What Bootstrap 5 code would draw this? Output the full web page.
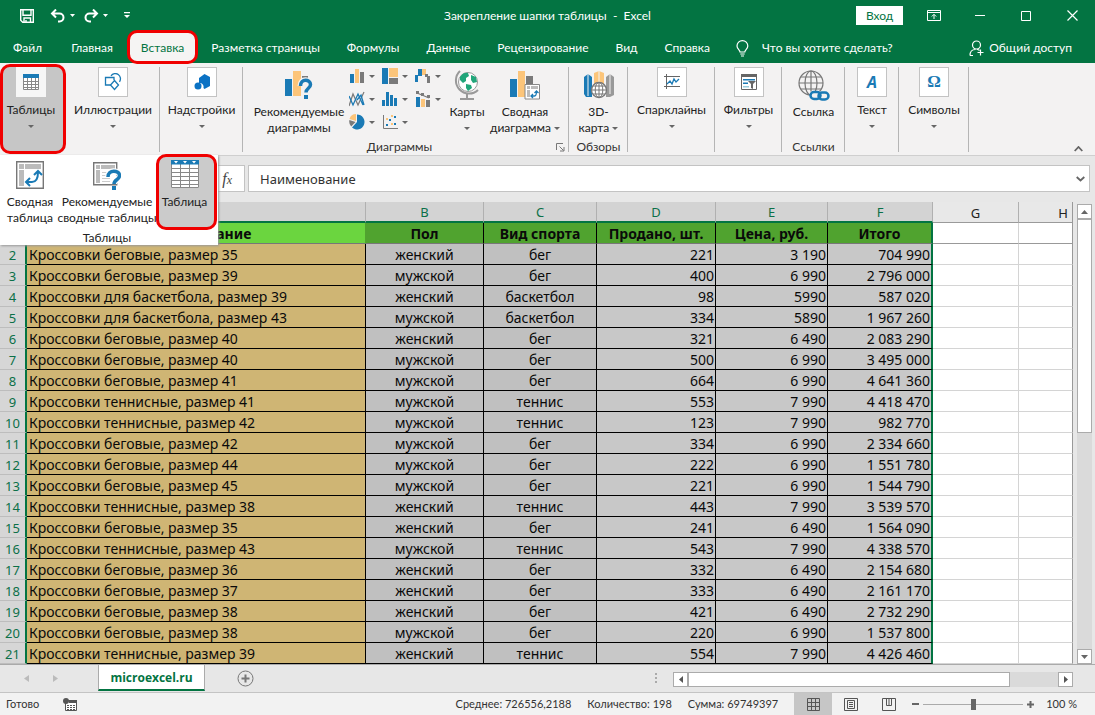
<!DOCTYPE html>
<html lang="ru">
<head>
<meta charset="utf-8">
<meta name="viewport" content="width=device-width, initial-scale=1">
<title>Закрепление шапки таблицы - Excel</title>
<link href="https://cdn.jsdelivr.net/npm/bootstrap@5.3.0/dist/css/bootstrap.min.css" rel="stylesheet">
<style>
:root{--xl:#037442;--blue:#1a7ab5;--org:#fcc57a;--gr:#7a7a7a;--ln:#ababab}
body{font-family:Lato,"Open Sans",sans-serif;font-size:12px;line-height:16px;color:#222;background:#e7e7e7}
button{font:inherit;color:inherit;background:none;border:0;padding:0}
svg{display:block;flex:none}
.red-ring{border:3px solid #f00000;border-radius:10px}
/* title and tabs */
.titlebar{height:31px;background:var(--xl);color:#fff}
.titlebar .win{width:46px;height:28px}
.signin{background:#fff;color:var(--xl);width:47px;height:19px;line-height:19px}
.side{flex:1 1 0}
.save{margin-left:20px}
.tabs{height:32px;background:var(--xl);color:#fff;padding-right:23px}
.tabs button{height:32px;padding:2px 14px 0 13px;white-space:nowrap}
.tabs .file{padding-right:16px}
.tabs .current{background:#f5f4f3;color:var(--xl);padding:2px 11px 0;height:34px;position:relative;z-index:3}
.tabs .tell{gap:13px}
/* ribbon */
.ribbon{height:93px;background:#f3f2f2;border-bottom:1px solid #cfcfcf;padding-bottom:3px}
.grp{padding-top:4px;position:relative}
.grp::after{content:"";position:absolute;right:0;top:4px;bottom:0;width:1px;background:#b5b5b5}
.grp.first::after{display:none}
.grp-label{height:10px;line-height:10px;color:#333}
.big{display:flex;flex-direction:column;align-items:center;text-align:center;white-space:nowrap}
.big .pic{height:37px;padding-top:2px}
.fold .icobox{width:30px;height:30px;border:1px solid #c3c3c3;background:#fff;display:flex;align-items:center;justify-content:center;margin-bottom:5px}
.caret{width:0;height:0;border:3px solid transparent;border-top-color:#666;border-bottom:0;display:inline-block}
.fold .caret,.big .below{margin-top:7px}
.g-tab{width:66px;padding:0}
.g-tab .fold{width:66px;height:90px;background:#c6c6c6;margin-top:1px;padding-right:4px}
.g-tab .icobox{border-color:#f6f6f6;background:#f6f6f6}
.chart-grid{display:grid;grid-template-columns:repeat(3,33px);grid-auto-rows:23px;align-content:start}
.chart-grid button{display:flex;align-items:center;gap:4px;height:18px}
.w-ill{width:94px}.w-add{width:83px}.w-chart{width:326px}.w-map{width:59px}.w-spark{width:87px}.w-filt{width:67px}.w-link{width:63px}.w-text{width:54px}.w-sym{width:70px}
.rec{width:100px;margin-left:6px}.maps{width:38px}.pivotc{width:78px}
/* gallery that drops from the first button */
.drop{position:absolute;left:0;top:92px;width:218px;height:90px;background:#fff;box-shadow:1px 1px 2px #999;z-index:5}
.drop .big .pic{height:39px;padding-top:6px}
.d1{width:60px}.d2{width:94px}.d3{width:61px;height:76px;margin-top:-1px;margin-left:2px;background:#cbcbcb;padding-right:4px}
.drop .d3 .pic{height:37px;padding-top:3px}
/* formula bar */
.fbar{height:46px;padding:9px 5px 0 0}
.fbar>*{height:27px}
.fx{width:245px;background:#fff;border:1px solid #c3c3c3;padding-right:12px;font:italic 16px "Liberation Serif",serif;color:#444}
.fx small{font-size:12px}
.fbox{background:#fff;border:1px solid #c3c3c3;margin-left:3px}
.fbox input{border:0;outline:0;padding:0 0 0 11px;font:13px "Noto Sans",sans-serif;color:#333;background:none;min-width:0}
/* sheet */
.gridwrap{min-height:0;overflow:hidden;border-bottom:1px solid #aaa}
.sheet{table-layout:fixed;width:100%;border-collapse:separate;border-spacing:0;font:14px/18px "Noto Sans",sans-serif;color:#0a0a0a}
.sheet th,.sheet td{height:21px;padding:2px 1px 0;white-space:nowrap;overflow:hidden;border:0 solid #000;border-width:0 1px 1px 0}
.sheet thead th{font-weight:400;font-size:13px;text-align:center;line-height:17px;background:#d3d3d3;color:#0b7048;border-right-color:#b0b0b0;border-bottom:2px solid var(--xl)}
.sheet thead th.off{background:#e8e8e8;color:#222;border-bottom:1px solid #9a9a9a}
.sheet tbody th{font-weight:400;font-size:13px;text-align:center;background:#d6d6d6;color:#0b7048;border-color:#bdbdbd;border-right:2px solid var(--xl);padding:2px 0 0}
.sheet td.c-a{background:#cfb574;padding-left:2px}
.sheet td.c-m{background:#c0c0c0;text-align:center}
.sheet td.c-n{background:#c8c8c8;text-align:right}
.sheet td.c-f{border-right:2px solid var(--xl)}
.sheet td.off{background:#fff;border-color:#d4d4d4}
.sheet tr.hd td{font-weight:700;text-align:center;background:#50a32f;border-bottom-color:#777}
.sheet tr.hd td.c-a{background:#6bd53f;border-right-color:#50a32f}
.sheet tr.hd td.off{background:#fff;border-bottom-color:#999}
.sheet .last{border-right-color:#999!important}
.vscroll{width:22px;padding:2px 3px 0 4px}
.sbtn{width:15px;height:15px;background:#fff;border:1px solid #ababab;display:flex;align-items:center;justify-content:center;flex:none}
.vthumb{height:214px;background:#fff;border:1px solid #ababab}
.track{background:#dadada}
/* sheet tabs */
.sheets{height:28px;border-bottom:1px solid #c4c4c4;padding-right:22px}
.sheet-tab{width:107px;height:26px;background:#fff;border:1px solid #ababab;border-top:0;border-bottom:2px solid var(--xl);color:var(--xl);font:700 12px "Open Sans",sans-serif}
.hbar{width:400px;height:15px;margin-top:7px}
.hthumb{width:322px;background:#fff;border:1px solid #ababab}
/* status */
.status{height:22px;background:#f2f2f2;font-size:11px;color:#333;padding:0 18px 0 6px;white-space:nowrap}
.vw{width:38px;height:22px;display:flex;align-items:center;justify-content:center}
.vw.on{background:#c6c6c6}
.zoom{appearance:none;width:100px;height:12px;background:linear-gradient(#aaa,#aaa) center/100% 1px no-repeat;margin:0 4px}
.zoom::-webkit-slider-thumb{appearance:none;width:5px;height:11px;background:#666;border:0;border-radius:0}
</style>
</head>
<body class="vh-100 d-flex flex-column overflow-hidden">

<header>
  <div class="titlebar d-flex">
    <div class="side d-flex align-items-center">
      <button class="save" aria-label="Сохранить"><svg width="14" height="14" viewBox="0 0 14 14" fill="none" stroke="#fff" stroke-width="1.4"><path d="M.7.7h12.6v12.6H2.7l-2-2zM3 .7v5.6h8V.7M4 13V9h6.500v4M6 11v2"/></svg></button>
      <button class="d-flex align-items-center ms-3" aria-label="Отменить"><svg width="16" height="14" viewBox="0 0 16 14" fill="none" stroke="#fff" stroke-width="2"><path d="M2 4.500h7.500a4 4 0 0 1 0 8H8M6 .5l-4 4 4 4"/></svg><svg class="ms-1" width="5" height="3"><path d="M0 0h5L2.500 3z" fill="#fff"/></svg></button>
      <button class="d-flex align-items-center ms-2" aria-label="Вернуть"><svg width="16" height="14" viewBox="0 0 16 14" fill="none" stroke="#fff" stroke-width="2"><path d="M14 4.500H6.500a4 4 0 0 0 0 8H8M10 .5l4 4-4 4"/></svg><svg class="ms-1" width="5" height="3"><path d="M0 0h5L2.500 3z" fill="#fff"/></svg></button>
      <button class="ms-3" aria-label="Настройка панели"><svg width="6" height="7"><path d="M0 0h6v1.200H0zM0 3h6L3 6z" fill="#fff"/></svg></button>
    </div>
    <div class="align-self-center" style="white-space:pre">Закрепление шапки таблицы  -  Excel</div>
    <div class="side d-flex justify-content-end align-items-center">
      <button class="signin me-1">Вход</button>
      <button class="win ms-1 d-flex align-items-center justify-content-center" aria-label="Параметры ленты"><svg width="14" height="11" viewBox="0 0 14 11" fill="none" stroke="#fff"><path d="M.5.5h13v10H.5zM.5 2.500h13M7 9V4.500M4.800 6.500L7 4.300l2.200 2.200"/></svg></button>
      <button class="win d-flex align-items-center justify-content-center" aria-label="Свернуть"><svg width="10" height="1"><path d="M0 0h10v1H0z" fill="#fff"/></svg></button>
      <button class="win d-flex align-items-center justify-content-center" aria-label="Развернуть"><svg width="10" height="10" fill="none" stroke="#fff"><path d="M.5.5h9v9h-9z"/></svg></button>
      <button class="win d-flex align-items-center justify-content-center" aria-label="Закрыть"><svg width="11" height="11" fill="none" stroke="#fff" stroke-width="1.200"><path d="M.5.5l10 10M10.500.5l-10 10"/></svg></button>
    </div>
  </div>
  <nav class="tabs d-flex align-items-center">
    <button class="file">Файл</button><button>Главная</button><button class="current red-ring">Вставка</button><button>Разметка страницы</button><button>Формулы</button><button>Данные</button><button>Рецензирование</button><button>Вид</button><button>Справка</button>
    <button class="tell d-flex align-items-center px-2 ms-1"><svg width="13" height="17" viewBox="0 0 13 17" fill="none" stroke="#fff" stroke-width="1.200"><path d="M4 12c0-2-3-3-3-6a5.300 5.300 0 0 1 10.800 0c0 3-3 4-3 6zM4.300 14h4.400M5 16h3"/></svg><span>Что вы хотите сделать?</span></button>
    <button class="ms-auto d-flex align-items-center gap-1 px-0"><svg width="16" height="17" viewBox="0 0 16 17" fill="none" stroke="#fff" stroke-width="1.200"><circle cx="7.500" cy="5" r="4"/><path d="M1 15.500c0-4 2.500-6 5.500-6M8 9.500c1.500 0 2 .5 2.500 1M1 15.500h3M11.500 9.500v6M8.500 12.500h6"/></svg><span>Общий доступ</span></button>
  </nav>
</header>

<section class="ribbon d-flex position-relative" aria-label="Лента">
  <div class="grp first g-tab"><button class="big fold red-ring"><span class="icobox"><svg width="16" height="16" viewBox="0 0 16 16"><path fill="#fff" d="M0 0h16v16H0z"/><path fill="none" stroke="#888" d="M.5 4v11.500h15V4M0 7.500h16M0 10.500h16M0 13.500h16M4.500 4v11M8.500 4v11M12.500 4v11"/><path fill="#1a7ab5" d="M0 0h16v4H0z"/></svg></span>Таблицы<span class="caret"></span></button></div>
  <div class="grp w-ill"><button class="big fold w-100"><span class="icobox"><svg width="18" height="18" viewBox="0 0 18 18" fill="none" stroke="#1a7ab5" stroke-width="1.300"><path d="M8 12H1.500V4.500H10V7M7 2.800a5 5 0 1 1 8.500 6"/><path d="M10.500 7.500L14.500 12l-4 4.500-4-4.500z" fill="#fff"/></svg></span>Иллюстрации<span class="caret"></span></button></div>
  <div class="grp w-add"><button class="big fold w-100"><span class="icobox"><svg width="16" height="16" viewBox="0 0 16 16" fill="#0b72c4"><path d="M5 4l5.500-4L16 3v9l-5.500 3-1-1a4 4 0 0 0-4.500-5z"/><circle cx="4" cy="12" r="3.500"/></svg></span>Надстройки<span class="caret"></span></button></div>

  <div class="grp w-chart d-flex flex-column">
    <div class="d-flex flex-fill">
      <button class="big rec"><span class="pic"><svg width="30" height="32" viewBox="0 0 30 32"><path fill="#1a7ab5" d="M1 10h7v17H1z"/><path fill="#fcc57a" d="M9 2h8v25H9z"/><path fill="#7a7a7a" d="M18 7h6v3h-6z"/><path d="M16.500 17c0-8 10-7 10-1.500 0 4-4.500 3.500-4.500 8" fill="none" stroke="#f3f2f2" stroke-width="6"/><path d="M16.500 17c0-8 10-7 10-1.500 0 4-4.500 3.500-4.500 8" fill="none" stroke="#1a7ab5" stroke-width="3.500"/><path fill="#1a7ab5" d="M20 26h4v4h-4z"/></svg></span>Рекомендуемые<br>диаграммы</button>
      <div class="chart-grid">
        <button aria-label="Гистограмма"><svg width="16" height="16"><path fill="#1a7ab5" d="M1 6h4v9H1z"/><path fill="#fcc57a" d="M6 1h4v14H6z"/><path fill="#7a7a7a" d="M11 4h4v11h-4z"/></svg><i class="caret"></i></button>
        <button aria-label="Иерархическая"><svg width="16" height="16"><path fill="#1a7ab5" d="M0 0h6v16H0z"/><path fill="#fcc57a" d="M7 0h9v9H7z"/><path fill="#7a7a7a" d="M7 10h9v6H7z"/></svg><i class="caret"></i></button>
        <button aria-label="Каскадная"><svg width="16" height="16"><path fill="#1a7ab5" d="M0 7h3v7H0zM3 1h4v7H3z"/><path fill="#fcc57a" d="M7 1h4v6H7z"/><path fill="#7a7a7a" d="M10 6h3v3h-3zM12 8h3v7h-3z"/></svg><i class="caret"></i></button>
        <button aria-label="График"><svg width="16" height="16" fill="none"><path stroke="#7a7a7a" stroke-width="1.200" d="M0 15L4 3l5 11 6-13"/><path stroke="#1a7ab5" stroke-width="1.300" d="M0 5l4 9 5-11 5 11M8 9l4-5 3 10"/></svg><i class="caret"></i></button>
        <button aria-label="Статистическая"><svg width="16" height="16" fill="#1a7ab5"><path d="M0 9h3v6H0zM4 1h3v14H4zM8 4h3v11H8zM12 7h3v8h-3z"/></svg><i class="caret"></i></button>
        <button aria-label="Комбинированная"><svg width="16" height="16"><path fill="#1a7ab5" d="M1 6h4v10H1z"/><path fill="#fcc57a" d="M6 8h4v8H6z"/><path fill="#7a7a7a" d="M11 9h4v7h-4z"/><path d="M2 2l5 2 7 3" stroke="#7a7a7a" stroke-width="1.300" fill="none"/><path fill="#7a7a7a" d="M1 0h3v3H1zM6 2h3v3H6zM12 4h3v3h-3z"/></svg><i class="caret"></i></button>
        <button aria-label="Круговая"><svg width="16" height="16"><path fill="#1a7ab5" d="M8 8V.5A7.500 7.500 0 1 1 3 13.600z"/><path fill="#fcc57a" d="M7 7V0a7 7 0 0 0-6.500 5z"/><path fill="#7a7a7a" d="M6.500 8L.4 6a7 7 0 0 0 1.800 6.500z"/></svg><i class="caret"></i></button>
        <button aria-label="Точечная"><svg width="16" height="16"><path d="M1.500 1v13.500H16" stroke="#7a7a7a" fill="none"/><path fill="#1a7ab5" d="M4 10h2v2H4zM7 5h2v2H7zM12 9h2v2h-2zM12 2h2v2h-2z"/><path fill="#fcc57a" d="M4 4h2v2H4zM9 9h2v2H9zM9 1h2v2H9z"/></svg><i class="caret"></i></button>
      </div>
      <button class="big maps"><span class="pic"><svg width="28" height="32" viewBox="0 0 28 32" fill="none"><circle cx="15" cy="13" r="9.500" fill="#fff" stroke="#999"/><path fill="#21a67a" d="M7 8c2-4 6-5 8-4l1 3-3 2v3l-3 2-3-3zM18 6l5 2 1 5-4 1-2-3zM13 15l5 1 1 3-4 3-2-3z"/><path d="M7 2A13 13 0 1 0 25 21" stroke="#999" stroke-width="2"/><path d="M14 25v4M7 30h14" stroke="#999" stroke-width="2"/></svg></span>Карты<span class="caret below"></span></button>
      <button class="big pivotc"><span class="pic"><svg width="30" height="32" viewBox="0 0 30 32"><path fill="#1a7ab5" d="M0 10h7v18H0z"/><path fill="#fcc57a" d="M8 2h7v26H8z"/><path fill="#7a7a7a" d="M16 7h7v9h-7z"/><path d="M15 15.500h14.500V30H15z" fill="#fff" stroke="#888"/><path fill="#bbb" d="M17 17h3v3h-3zM21 17h7v3h-7zM17 21h3v7h-3z"/><path d="M21 27h3.500q2 0 2-5M23 25l-2 2 2 2M24.500 24l2-2 2 2" fill="none" stroke="#1a7ab5" stroke-width="1.300"/></svg></span>Сводная<span class="text-nowrap">диаграмма <i class="caret align-middle"></i></span></button>
    </div>
    <div class="grp-label d-flex align-items-center"><span class="flex-fill text-center">Диаграммы</span><button class="me-1" aria-label="Параметры диаграмм"><svg width="9" height="9" fill="none" stroke="#777"><path d="M.5 7V.5H7M3.500 3.500l4 4M8 4v4H4"/></svg></button></div>
  </div>

  <div class="grp w-map d-flex flex-column">
    <button class="big flex-fill"><span class="pic"><svg width="30" height="32" viewBox="0 0 30 32"><path fill="#1a7ab5" d="M0 8l4-3 4 3v20H2l-2-3z"/><path fill="#fcc57a" d="M10 4l5-2 5 2v14H10z"/><path fill="#999" d="M22 8l4-3 4 3v18l-4 2h-4z"/><path d="M4 5v22M15 2v12M26 5v20" stroke="#f3f2f2"/><circle cx="15" cy="21" r="7.500" fill="#fff" stroke="#777" stroke-width="1.300"/><path d="M7.500 21h15M15 13.500v15M9 17h12M9 25h12" stroke="#777"/><ellipse cx="15" cy="21" rx="3.800" ry="7.500" fill="none" stroke="#777"/></svg></span>3D-<span>карта <i class="caret align-middle"></i></span></button>
    <div class="grp-label text-center">Обзоры</div>
  </div>
  <div class="grp w-spark"><button class="big fold w-100"><span class="icobox"><svg width="16" height="16" viewBox="0 0 16 16" fill="none"><path stroke="#666" d="M2.500 0v15M0 2.500h16M0 12.500h16"/><path stroke="#1a7ab5" stroke-width="1.300" d="M3 10l3-3 2 3 2-5 2 3 3-3"/></svg></span>Спарклайны<span class="caret"></span></button></div>
  <div class="grp w-filt"><button class="big fold w-100"><span class="icobox"><svg width="16" height="16" viewBox="0 0 16 16"><path d="M.5.5h15v15H.5z" fill="#fff" stroke="#666"/><path fill="#666" d="M0 0h16v3H0zM7 7h8l-3 3v5l-2-1v-4z"/><path fill="#1a7ab5" d="M2 5h12v1.500H2zM2 8.500h5V10H2z"/><path fill="#9cd" d="M2 12h6v1.500H2z"/></svg></span>Фильтры<span class="caret"></span></button></div>
  <div class="grp w-link d-flex flex-column">
    <button class="big flex-fill"><span class="pic"><svg width="32" height="34" viewBox="0 0 32 34" fill="none" stroke="#777" stroke-width="1.200"><circle cx="13" cy="14" r="12"/><ellipse cx="13" cy="14" rx="6" ry="12"/><path d="M13 2v24M1 14h24M3 8h20M3 20h20"/><path stroke="#f3f2f2" stroke-width="9" d="M12 27h19"/><rect x="12.500" y="23" width="10" height="7" rx="3.500" stroke="#1a7ab5" stroke-width="2.500"/><rect x="20.500" y="23.500" width="10" height="7" rx="3.500" stroke="#1a7ab5" stroke-width="2.500"/></svg></span>Ссылка</button>
    <div class="grp-label text-center">Ссылки</div>
  </div>
  <div class="grp w-text"><button class="big fold w-100"><span class="icobox" style="color:#1a7ab5;font:italic 700 16px 'Open Sans',sans-serif">A</span>Текст<span class="caret"></span></button></div>
  <div class="grp w-sym"><button class="big fold w-100"><span class="icobox" style="color:#1a7ab5;font:700 17px 'Liberation Serif',serif">Ω</span>Символы<span class="caret"></span></button></div>
  <button class="ms-auto align-self-end me-2 pe-1" aria-label="Свернуть ленту"><svg width="9" height="6" fill="none" stroke="#666" stroke-width="1.800"><path d="M.7 5l3.800-4 3.800 4"/></svg></button>

  <div class="drop">
    <div class="d-flex">
      <button class="big d1"><span class="pic"><svg width="28" height="28" viewBox="0 0 28 28"><path d="M.7.700h26.600v26.600H.7z" fill="#fff" stroke="#777" stroke-width="1.400"/><path fill="#bbb" d="M3 3h5v5H3zM9 3h16v5H9zM3 9h5v16H3z"/><path d="M11 21h5q6 0 6-10M14 17l-4 4 4 4M18 14l4-4 4 4" fill="none" stroke="#1a7ab5" stroke-width="2"/></svg></span>Сводная<br>таблица</button>
      <button class="big d2"><span class="pic"><svg width="28" height="30" viewBox="0 0 28 30"><path d="M.7 1.700h23v22H.7z" fill="#fff" stroke="#777" stroke-width="1.400"/><path fill="#bbb" d="M3 4h4v4H3zM8 4h14v4H8zM3 9h4v13H3z"/><path stroke="#ccc" d="M9 11.500h12M9 14.500h8M9 17.500h8M9 20.500h8"/><path d="M15 16c0-8 11.500-7 11.500-1.500 0 4.500-5.500 4-5.500 8.500" fill="none" stroke="#fff" stroke-width="6"/><path d="M15 16c0-8 11.500-7 11.500-1.500 0 4.500-5.500 4-5.500 8.500" fill="none" stroke="#1a7ab5" stroke-width="3.500"/><path fill="#1a7ab5" d="M19 25h4v4h-4z"/></svg></span>Рекомендуемые<br>сводные таблицы</button>
      <button class="big d3 red-ring"><span class="pic"><svg width="28" height="28" viewBox="0 0 28 28"><path fill="#fff" d="M0 0h28v28H0z"/><path fill="none" stroke="#888" d="M.5 4v23.500h27V4M0 8.500h28M0 12.500h28M0 16.500h28M0 20.500h28M0 24.500h28M9.500 4v23M18.500 4v23"/><path fill="#1a7ab5" d="M0 0h28v4.500H0z"/><path fill="#fff" d="M3 1h4L5 3.500zM12 1h4l-2 2.500zM21 1h4l-2 2.500z"/></svg></span>Таблица</button>
    </div>
    <div class="text-center pe-1">Таблицы</div>
  </div>
</section>

<div class="fbar d-flex">
  <button class="fx text-end" aria-label="Вставить функцию">f<small>x</small></button>
  <div class="fbox flex-fill d-flex align-items-center"><input class="flex-fill h-100" aria-label="Строка формул" value="Наименование"><svg class="me-1" width="9" height="6" fill="none" stroke="#666" stroke-width="1.800"><path d="M.7 1l3.800 3.500L8.300 1"/></svg></div>
</div>

<main class="gridwrap d-flex flex-fill">
  <div class="flex-fill overflow-hidden">
    <table class="sheet">
      <colgroup><col style="width:27px"><col style="width:339px"><col style="width:118px"><col style="width:113px"><col style="width:119px"><col style="width:112px"><col style="width:105px"><col style="width:86px"><col></colgroup>
      <thead><tr><th></th><th></th><th>B</th><th>C</th><th>D</th><th>E</th><th>F</th><th class="off">G</th><th class="off last text-end pe-1">H</th></tr></thead>
      <tbody id="rows">
        <tr class="hd"><th></th><td class="c-a">Наименование</td><td>Пол</td><td>Вид спорта</td><td>Продано, шт.</td><td>Цена, руб.</td><td class="c-f">Итого</td><td class="off"></td><td class="off last"></td></tr>
      </tbody>
    </table>
  </div>
  <div class="vscroll d-flex flex-column">
    <button class="sbtn" aria-label="Вверх"><svg width="7" height="4"><path d="M0 4h7L3.500 0z" fill="#666"/></svg></button>
    <div class="track flex-fill"><div class="vthumb"></div></div>
    <button class="sbtn" aria-label="Вниз"><svg width="7" height="4"><path d="M0 0h7L3.500 4z" fill="#666"/></svg></button>
  </div>
</main>

<div class="sheets d-flex">
  <div class="d-flex align-items-center ps-4" style="width:98px">
    <button aria-label="Предыдущий лист"><svg width="5" height="7"><path d="M5 0v7L0 3.500z" fill="#bbb"/></svg></button>
    <button class="ms-4" aria-label="Следующий лист"><svg width="5" height="7"><path d="M0 0v7l5-3.500z" fill="#bbb"/></svg></button>
  </div>
  <button class="sheet-tab">microexcel.ru</button>
  <button class="ms-4 ps-2" aria-label="Новый лист"><svg width="17" height="17" fill="none" stroke="#777"><circle cx="8.500" cy="8.500" r="7.500"/><path stroke-width="2" d="M8.500 4.500v8M4.500 8.500h8"/></svg></button>
  <svg class="ms-auto me-3 align-self-center" width="2" height="12"><path fill="#aaa" d="M0 0h2v2H0zM0 4h2v2H0zM0 8h2v2H0z"/></svg>
  <div class="hbar d-flex">
    <button class="sbtn" aria-label="Влево"><svg width="4" height="7"><path d="M4 0v7L0 3.500z" fill="#555"/></svg></button>
    <div class="track flex-fill d-flex"><div class="hthumb"></div></div>
    <button class="sbtn" aria-label="Вправо"><svg width="4" height="7"><path d="M0 0v7l4-3.500z" fill="#555"/></svg></button>
  </div>
</div>

<footer class="status d-flex align-items-center">
  <span>Готово</span>
  <svg class="ms-4" width="14" height="13" viewBox="0 0 14 13"><path d="M2.500 2.500h11v10h-11z" fill="#fff" stroke="#555"/><path fill="#555" d="M6 2h8v3H6z"/><path stroke="#555" stroke-dasharray="2 1" d="M4 7.500h9M4 9.500h9M4 11.500h9"/><circle cx="3" cy="3" r="3" fill="#555"/></svg>
  <div class="ms-auto d-flex gap-3 me-3"><span>Среднее: 726556,2188</span><span>Количество: 198</span><span>Сумма: 69749397</span></div>
  <button class="vw on" aria-label="Обычный"><svg width="13" height="13" fill="none" stroke="#555"><path d="M.5.500h12v12H.5zM4.500 0v13M8.500 0v13M0 4.500h13M0 8.500h13"/></svg></button>
  <button class="vw" aria-label="Разметка страницы"><svg width="14" height="13" fill="none" stroke="#555"><path d="M.5.500h13v12H.5zM3.500 2.500h7v8h-7zM5 4.500h4M5 6.500h4M5 8.500h4"/></svg></button>
  <button class="vw" aria-label="Страничный"><svg width="14" height="13" fill="none" stroke="#555"><path d="M.5.500h13v12H.5zM4.500 0v7.500h5V0M7 0v7"/></svg></button>
  <button class="ms-1" aria-label="Уменьшить"><svg width="7" height="2"><path fill="#666" d="M0 0h7v2H0z"/></svg></button>
  <input class="zoom" type="range" min="0" max="100" value="50" aria-label="Масштаб">
  <button aria-label="Увеличить"><svg width="7" height="7"><path fill="#666" d="M0 2.500h7v2H0zM2.500 0h2v7h-2z"/></svg></button>
  <span class="ms-2 ps-1">100 %</span>
</footer>

<script>
const data = `Кроссовки беговые, размер 35|женский|бег|221|3 190|704 990
Кроссовки беговые, размер 39|мужской|бег|400|6 990|2 796 000
Кроссовки для баскетбола, размер 39|женский|баскетбол|98|5990|587 020
Кроссовки для баскетбола, размер 43|мужской|баскетбол|334|5890|1 967 260
Кроссовки беговые, размер 40|женский|бег|321|6 490|2 083 290
Кроссовки беговые, размер 40|мужской|бег|500|6 990|3 495 000
Кроссовки беговые, размер 41|мужской|бег|664|6 990|4 641 360
Кроссовки теннисные, размер 41|мужской|теннис|553|7 990|4 418 470
Кроссовки теннисные, размер 42|мужской|теннис|123|7 990|982 770
Кроссовки беговые, размер 42|мужской|бег|334|6 990|2 334 660
Кроссовки беговые, размер 44|мужской|бег|222|6 990|1 551 780
Кроссовки беговые, размер 45|мужской|бег|221|6 990|1 544 790
Кроссовки теннисные, размер 38|женский|теннис|443|7 990|3 539 570
Кроссовки беговые, размер 35|женский|бег|241|6 490|1 564 090
Кроссовки теннисные, размер 43|мужской|теннис|543|7 990|4 338 570
Кроссовки беговые, размер 36|женский|бег|332|6 490|2 154 680
Кроссовки беговые, размер 37|женский|бег|333|6 490|2 161 170
Кроссовки беговые, размер 38|женский|бег|421|6 490|2 732 290
Кроссовки беговые, размер 38|мужской|бег|220|6 990|1 537 800
Кроссовки теннисные, размер 39|женский|теннис|554|7 990|4 426 460`;
const cls = ['c-a','c-m','c-m','c-n','c-n','c-n c-f'];
document.getElementById('rows').insertAdjacentHTML('beforeend', data.split('\n').map((line, i) =>
  `<tr><th>${i + 2}</th>${line.split('|').map((v, j) => `<td class="${cls[j]}">${v}</td>`).join('')}<td class="off"></td><td class="off last"></td></tr>`).join(''));
</script>
<script src="https://cdn.jsdelivr.net/npm/bootstrap@5.3.0/dist/js/bootstrap.bundle.min.js"></script>
</body>
</html>
